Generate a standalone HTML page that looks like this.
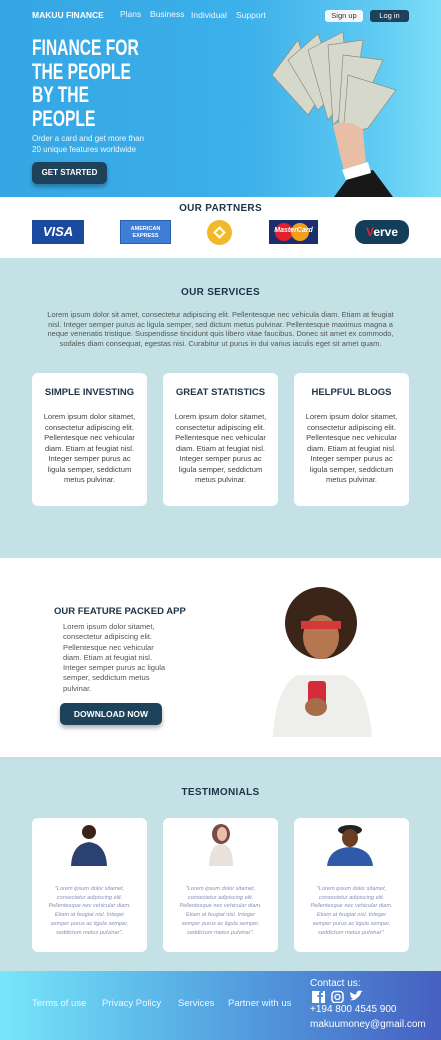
<!DOCTYPE html>
<html><head><meta charset="utf-8"><style>
*{margin:0;padding:0;box-sizing:border-box}
body{width:441px;height:1040px;overflow:hidden;font-family:"Liberation Sans",sans-serif;background:#fff;position:relative}
.abs{position:absolute}
.hero{position:absolute;left:0;top:0;width:441px;height:197px;background:linear-gradient(90deg,#35a6e4 0%,#3cb0ea 55%,#5fcaf2 85%,#7edff8 100%)}
.nav{color:#eef8ff;font-size:8.5px}
h1{color:#fff;font-size:22px;line-height:23.5px;font-weight:bold;transform:scaleX(.71);transform-origin:left top;white-space:nowrap}
.btn{background:#1e4259;color:#fff;font-weight:bold;border-radius:5px;box-shadow:0 3px 4px rgba(0,0,0,.3);text-align:center}
.sec{background:#c4e2e6}
.card{background:#fff;border-radius:6px;text-align:center}
.card h3{font-size:9.5px;color:#1d3346;margin-top:14px}
.card p{font-size:7.6px;color:#444;line-height:10.5px;margin:14px 8px 0}
.tcard{background:#fff;border-radius:6px;text-align:center}
.tcard p{font-size:5.6px;font-style:italic;color:#8a8fb8;line-height:8.7px;position:absolute;top:67px;left:16px;right:16px}
.title{font-size:10px;font-weight:bold;color:#1d3346;letter-spacing:.3px;text-align:center;width:441px}
.ft{color:#eef8ff;font-size:9.5px}
</style></head><body>
<div class="hero"></div>
<div class="abs" style="left:32px;top:10px;color:#fff;font-weight:bold;font-size:8.5px">MAKUU FINANCE</div>
<div class="abs nav" style="left:120px;top:9px">Plans</div>
<div class="abs nav" style="left:150px;top:9px">Business</div>
<div class="abs nav" style="left:191px;top:10px">Individual</div>
<div class="abs nav" style="left:236px;top:10px">Support</div>
<div class="abs" style="left:325px;top:10px;width:38px;height:12px;background:#f4f8fb;border-radius:3px;font-size:7.5px;color:#333;text-align:center;line-height:12px">Sign up</div>
<div class="abs" style="left:370px;top:10px;width:39px;height:12px;background:#1e4259;border-radius:3px;font-size:7.5px;color:#fff;text-align:center;line-height:12px">Log in</div>
<h1 class="abs" style="left:32px;top:36px">FINANCE FOR<br>THE PEOPLE<br>BY THE<br>PEOPLE</h1>
<div class="abs" style="left:32px;top:134px;color:#eef8ff;font-size:8px;line-height:10.5px">Order a card and get more than<br>20 unique features worldwide</div>
<div class="abs btn" style="left:32px;top:162px;width:75px;height:22px;font-size:8px;line-height:22px">GET STARTED</div>
<svg class="abs" style="left:268px;top:30px" width="130" height="167">
<g fill="#d6d8cc" stroke="#8a8d80" stroke-width=".7">
<polygon points="4,45 30,10 50,70 40,85"/><polygon points="20,30 50,4 70,60 50,80"/><polygon points="40,20 75,2 80,65 60,90"/><polygon points="60,15 95,10 85,75 65,95"/><polygon points="75,25 115,30 90,85 70,100"/><polygon points="80,45 128,60 100,98 75,105"/>
</g>
<path d="M65 95 Q80 88 95 100 L98 135 Q90 145 78 148 L72 125 Z" fill="#e8bfa6"/>
<path d="M80 148 L105 140 L125 167 L66 167 Z" fill="#181818"/>
<path d="M74 140 L100 132 L103 143 L78 150 Z" fill="#fff"/>
</svg>
<div class="abs title" style="top:203px">OUR PARTNERS</div>
<div class="abs" style="left:32px;top:220px;width:52px;height:24px;background:#1a4aa0;color:#fff;font-weight:bold;font-style:italic;font-size:13px;text-align:center;line-height:24px">VISA</div>
<div class="abs" style="left:120px;top:220px;width:51px;height:24px;background:#3f7ed6;border:1px solid #2a5fb0;color:#fff;font-size:5.5px;font-weight:bold;text-align:center;line-height:7px;padding-top:5px">AMERICAN<br>EXPRESS</div>
<div class="abs" style="left:207px;top:220px;width:25px;height:25px;background:#f0b92c;border-radius:50%"><div style="position:absolute;left:8px;top:8px;width:9px;height:9px;border:2px solid #fff;transform:rotate(45deg)"></div></div>
<div class="abs" style="left:269px;top:220px;width:49px;height:24px;background:#1b2f6f"><div style="position:absolute;left:6px;top:3px;width:18px;height:18px;border-radius:50%;background:#e4202c"></div><div style="position:absolute;left:22px;top:3px;width:18px;height:18px;border-radius:50%;background:#f49f1c"></div><div style="position:absolute;left:0;top:7px;width:49px;text-align:center;color:#fff;font-size:7px;font-style:italic;font-weight:bold">MasterCard</div></div>
<div class="abs" style="left:355px;top:220px;width:54px;height:24px;background:#123e5a;border-radius:10px;color:#fff;font-weight:bold;font-size:12px;text-align:center;line-height:24px"><span style="color:#e4202c">V</span>erve</div>
<div class="abs sec" style="left:0;top:258px;width:441px;height:300px"></div>
<div class="abs title" style="top:287px">OUR SERVICES</div>
<div class="abs" style="left:40px;top:310px;width:361px;font-size:7.5px;color:#555;line-height:9.5px;text-align:center">Lorem ipsum dolor sit amet, consectetur adipiscing elit. Pellentesque nec vehicula diam. Etiam at feugiat nisl. Integer semper purus ac ligula semper, sed dictum metus pulvinar. Pellentesque maximus magna a neque venenatis tristique. Suspendisse tincidunt quis libero vitae faucibus. Donec sit amet ex commodo, sodales diam consequat, egestas nisi. Curabitur ut purus in dui varius iaculis eget sit amet quam.</div>
<div class="abs card" style="left:32px;top:373px;width:115px;height:133px"><h3>SIMPLE INVESTING</h3><p>Lorem ipsum dolor sitamet, consectetur adipiscing elit. Pellentesque nec vehicular diam. Etiam at feugiat nisl. Integer semper purus ac ligula semper, seddictum metus pulvinar.</p></div>
<div class="abs card" style="left:163px;top:373px;width:115px;height:133px"><h3>GREAT STATISTICS</h3><p>Lorem ipsum dolor sitamet, consectetur adipiscing elit. Pellentesque nec vehicular diam. Etiam at feugiat nisl. Integer semper purus ac ligula semper, seddictum metus pulvinar.</p></div>
<div class="abs card" style="left:294px;top:373px;width:115px;height:133px"><h3>HELPFUL BLOGS</h3><p>Lorem ipsum dolor sitamet, consectetur adipiscing elit. Pellentesque nec vehicular diam. Etiam at feugiat nisl. Integer semper purus ac ligula semper, seddictum metus pulvinar.</p></div>
<div class="abs" style="left:54px;top:606px;font-size:9.5px;font-weight:bold;color:#1d3346">OUR FEATURE PACKED APP</div>
<div class="abs" style="left:63px;top:622px;width:104px;font-size:7.6px;color:#555;line-height:10.3px">Lorem ipsum dolor sitamet, consectetur adipiscing elit. Pellentesque nec vehicular diam. Etiam at feugiat nisl. Integer semper purus ac ligula semper, seddictum metus pulvinar.</div>
<div class="abs btn" style="left:60px;top:703px;width:102px;height:22px;font-size:8.5px;line-height:22px">DOWNLOAD NOW</div>
<svg class="abs" style="left:268px;top:585px" width="106" height="152">
<circle cx="53" cy="38" r="36" fill="#3a2518"/>
<ellipse cx="53" cy="52" rx="18" ry="22" fill="#b57650"/>
<rect x="33" y="36" width="40" height="8" fill="#d23a3a"/>
<path d="M5 152 Q8 100 30 90 L76 90 Q100 100 104 152Z" fill="#eeeeea"/>
<rect x="40" y="96" width="18" height="30" rx="3" fill="#d52c3c"/>
<ellipse cx="48" cy="122" rx="11" ry="9" fill="#a86c48"/>
</svg>
<div class="abs sec" style="left:0;top:757px;width:441px;height:214px"></div>
<div class="abs title" style="top:787px">TESTIMONIALS</div>
<div class="abs tcard" style="left:32px;top:818px;width:115px;height:134px"><svg style="position:absolute;left:38px;top:4px" width="38" height="44"><circle cx="19" cy="10" r="7" fill="#3a2418"/><path d="M1 44 Q2 22 19 20 Q36 22 37 44Z" fill="#2b4172"/></svg><p>"Lorem ipsum dolor sitamet, consectetur adipiscing elit. Pellentesque nec vehicular diam. Etiam at feugiat nisl. Integer semper purus ac ligula semper, seddictum metus pulvinar".</p></div>
<div class="abs tcard" style="left:163px;top:818px;width:115px;height:134px"><svg style="position:absolute;left:44px;top:4px" width="28" height="44"><ellipse cx="14" cy="12" rx="9" ry="10" fill="#7a4a48"/><ellipse cx="15" cy="12" rx="5" ry="7" fill="#e6c0a4"/><path d="M2 44 Q3 22 14 22 Q26 22 26 44Z" fill="#e8e2da"/></svg><p>"Lorem ipsum dolor sitamet, consectetur adipiscing elit. Pellentesque nec vehicular diam. Etiam at feugiat nisl. Integer semper purus ac ligula semper, seddictum metus pulvinar".</p></div>
<div class="abs tcard" style="left:294px;top:818px;width:115px;height:134px"><svg style="position:absolute;left:31px;top:4px" width="50" height="44"><ellipse cx="25" cy="8" rx="12" ry="5" fill="#222"/><ellipse cx="25" cy="16" rx="8" ry="9" fill="#6a3e24"/><path d="M2 44 Q4 26 25 25 Q46 26 48 44Z" fill="#2f5aa8"/></svg><p>"Lorem ipsum dolor sitamet, consectetur adipiscing elit. Pellentesque nec vehicular diam. Etiam at feugiat nisl. Integer semper purus ac ligula semper, seddictum metus pulvinar".</p></div>
<div class="abs" style="left:0;top:971px;width:441px;height:69px;background:linear-gradient(90deg,#78e6fa 0%,#5db8e8 35%,#4f8fd8 65%,#4660c0 100%)"></div>
<div class="abs ft" style="left:32px;top:998px">Terms of use</div>
<div class="abs ft" style="left:102px;top:998px">Privacy Policy</div>
<div class="abs ft" style="left:178px;top:998px">Services</div>
<div class="abs ft" style="left:228px;top:998px">Partner with us</div>
<div class="abs" style="left:310px;top:978px;color:#fff;font-size:10px">Contact us:</div>
<svg class="abs" style="left:311px;top:990px" width="56" height="13"><rect x="1" y="1" width="13" height="12" fill="#fff"/><path d="M10 13 V7 H12 V5 H10 V4 Q10 3 11 3 H12 V1 H10 Q8 1 8 3 V5 H6.5 V7 H8 V13Z" fill="#4f8fd8"/><rect x="21" y="1.5" width="11" height="11" rx="3" fill="none" stroke="#fff" stroke-width="1.5"/><circle cx="26.5" cy="7" r="2.5" fill="none" stroke="#fff" stroke-width="1.3"/><path d="M39 10 Q43 11 46 8 Q50 5 50 2 L52 1 L50.5 1 Q49 0 47 1 Q45 2 45.5 4.5 Q42 4.5 39.5 2 Q38.5 4.5 40.5 6 L39.5 6 Q40 8 42 8.5 Q41 9.5 39 10Z" fill="#fff"/></svg>
<div class="abs" style="left:310px;top:1004px;color:#fff;font-size:10px">+194 800 4545 900</div>
<div class="abs" style="left:310px;top:1019px;color:#fff;font-size:10px">makuumoney@gmail.com</div>
</body></html>
